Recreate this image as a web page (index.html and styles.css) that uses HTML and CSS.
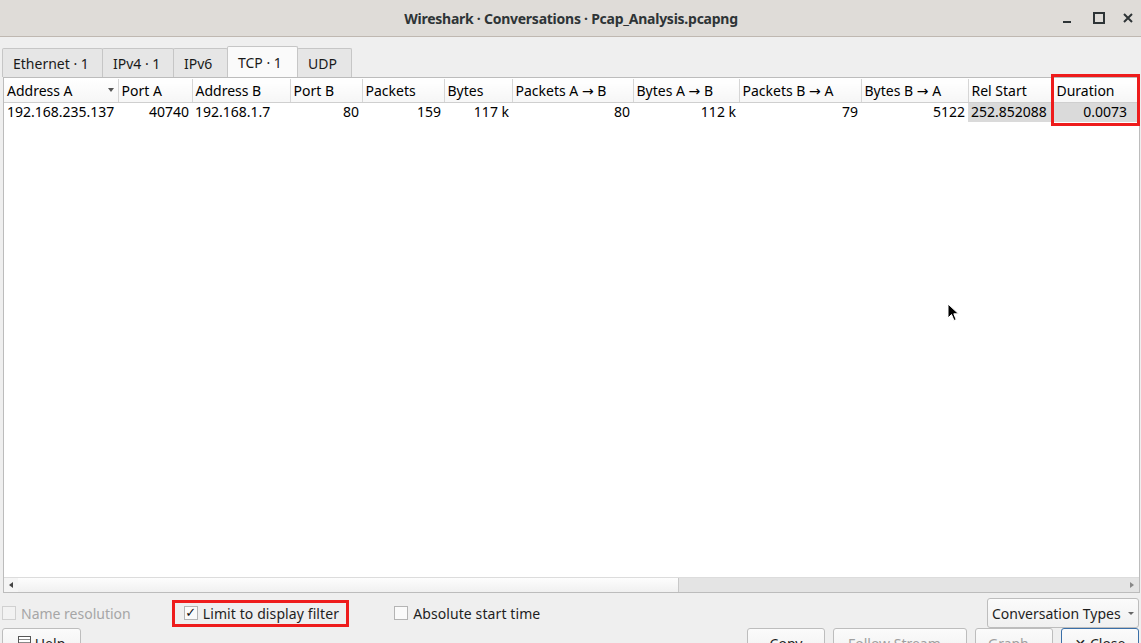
FILE: index.html
```html
<!DOCTYPE html>
<html>
<head>
<meta charset="utf-8">
<link rel="stylesheet" href="styles.css">
</head>
<body>
<div class="window">
  <header class="titlebar">
    <div class="title">Wireshark · Conversations · Pcap_Analysis.pcapng</div>
    <div class="controls">
      <span class="ctl min"></span>
      <span class="ctl max"></span>
      <span class="ctl close">
        <svg width="10" height="10" viewBox="0 0 10 10"><path d="M1 1L9 9M9 1L1 9" stroke="#2e3436" stroke-width="2"/></svg>
      </span>
    </div>
  </header>
  <main class="content">
    <nav class="tabs">
      <div class="tab">Ethernet · 1</div>
      <div class="tab">IPv4 · 1</div>
      <div class="tab">IPv6</div>
      <div class="tab active">TCP · 1</div>
      <div class="tab">UDP</div>
    </nav>
    <section class="pane">
      <div class="tablearea">
        <table class="grid">
          <colgroup>
            <col class="w114"><col class="w74"><col class="w98"><col class="w72"><col class="w82"><col class="w68"><col class="w121"><col class="w106"><col class="w122"><col class="w107"><col class="w85"><col class="w86">
          </colgroup>
          <thead>
            <tr>
              <th class="sorted">Address A<span class="sortarrow"></span></th>
              <th>Port A</th>
              <th>Address B</th>
              <th>Port B</th>
              <th>Packets</th>
              <th>Bytes</th>
              <th>Packets A → B</th>
              <th>Bytes A → B</th>
              <th>Packets B → A</th>
              <th>Bytes B → A</th>
              <th>Rel Start</th>
              <th>Duration</th>
            </tr>
          </thead>
          <tbody>
            <tr>
              <td>192.168.235.137</td>
              <td class="r">40740</td>
              <td>192.168.1.7</td>
              <td class="r">80</td>
              <td class="r">159</td>
              <td class="r">117 k</td>
              <td class="r">80</td>
              <td class="r">112 k</td>
              <td class="r">79</td>
              <td class="r">5122</td>
              <td class="hl">252.852088</td>
              <td class="r hl">0.0073</td>
            </tr>
          </tbody>
        </table>
      </div>
      <div class="hscroll">
        <span class="arrow left"></span>
        <span class="thumb"></span>
        <span class="trough"></span>
        <span class="arrow right"></span>
      </div>
    </section>
    <div class="options">
      <label class="check disabled"><span class="box"></span>Name resolution</label>
      <label class="check marked"><span class="box checked">✓</span>Limit to display filter</label>
      <label class="check abs"><span class="box"></span>Absolute start time</label>
      <span class="spacer"></span>
      <button class="btn dropdown">Conversation Types<span class="caret"></span></button>
    </div>
    <div class="buttons">
      <button class="btn help"><span class="helpicon"></span>Help</button>
      <span class="spacer"></span>
      <button class="btn">Copy</button>
      <button class="btn dim wide">Follow Stream...</button>
      <button class="btn dim">Graph...</button>
      <button class="btn focus">✕ Close</button>
    </div>
  </main>
  <div class="annot"></div>
  <svg class="cursor" width="14" height="20" viewBox="0 0 14 20"><path d="M1 1 L1 15 L4.5 11.5 L7 17.5 L9.2 16.6 L6.8 10.8 L11.5 10.8 Z" fill="#000" stroke="#fff" stroke-width="1"/></svg>
</div>
</body>
</html>
```

FILE: styles.css
```css
* { box-sizing: border-box; }
html, body { margin: 0; padding: 0; }
body {
  width: 1141px;
  height: 643px;
  overflow: hidden;
  font-family: "Noto Sans", "DejaVu Sans", sans-serif;
  font-size: 14px;
  color: #000;
  background: #efefef;
}
.window {
  position: relative;
  width: 1141px;
  height: 643px;
  overflow: hidden;
  display: flex;
  flex-direction: column;
}
.titlebar {
  height: 37px;
  flex: none;
  background: #dfdcd8;
  border-bottom: 1px solid #bfb8b1;
  display: flex;
  align-items: center;
  justify-content: center;
  position: relative;
}
.title {
  font-weight: bold;
  font-size: 14px;
  color: #2e3436;
  letter-spacing: -0.25px;
  padding-left: 1px;
}
.controls {
  position: absolute;
  right: 0;
  top: 0;
  height: 36px;
  display: flex;
  align-items: center;
}
.ctl {
  width: 32px;
  height: 20px;
  display: flex;
  align-items: center;
  justify-content: center;
}
.ctl.min::before {
  content: "";
  width: 8px;
  height: 2px;
  background: #2e3436;
  margin-top: 8px;
}
.ctl.max::before {
  content: "";
  width: 8px;
  height: 8px;
  border: 2px solid #2e3436;
}
.ctl.close { width: 26px; }
.content {
  flex: 1;
  display: flex;
  flex-direction: column;
  background: #efefef;
}
.tabs {
  display: flex;
  padding: 10px 0 0 2px;
  height: 40px;
  align-items: flex-end;
}
.tab {
  height: 29px;
  padding: 0 10px;
  display: flex;
  align-items: center;
  background: #e6e6e6;
  border: 1px solid #c6c6c6;
  border-bottom: none;
  border-radius: 2px 2px 0 0;
  color: #1a1a1a;
  margin-right: -1px;
}
.tab:nth-child(1) { width: 101px; }
.tab:nth-child(2) { width: 72px; }
.tab:nth-child(3) { width: 55px; }
.tab:nth-child(4) { width: 71px; }
.tab:nth-child(5) { width: 55px; }
.tab.active {
  background: #fafafa;
  height: 31px;
  position: relative;
  z-index: 1;
}
.pane {
  margin-left: 3px;
  width: 1137px;
  height: 516px;
  border: 1px solid #bcbcbc;
  background: #fff;
  display: flex;
  flex-direction: column;
}
.tablearea {
  flex: 1;
  padding-top: 1px;
  overflow: hidden;
}
.grid {
  border-collapse: collapse;
  table-layout: fixed;
  width: 1135px;
}
.w114 { width: 114px; } .w74 { width: 74px; } .w98 { width: 98px; }
.w72 { width: 72px; } .w82 { width: 82px; } .w68 { width: 68px; }
.w121 { width: 121px; } .w106 { width: 106px; } .w122 { width: 122px; }
.w107 { width: 107px; } .w85 { width: 85px; } .w86 { width: 86px; }
.grid th {
  height: 23px;
  font-weight: normal;
  text-align: left;
  padding: 0 3px 0 3px;
  background: linear-gradient(#ffffff, #f6f6f6);
  border-right: 1px solid #d6d6d6;
  border-bottom: 1px solid #cfcfcf;
  white-space: nowrap;
  overflow: hidden;
  position: relative;
}
.grid th:last-child { border-right: none; }
.sortarrow {
  position: absolute;
  right: 4px;
  top: 9px;
  width: 0;
  height: 0;
  border-left: 3.5px solid transparent;
  border-right: 3.5px solid transparent;
  border-top: 4px solid #555;
}
.grid td {
  height: 20px;
  padding: 0 3px;
  white-space: nowrap;
  overflow: hidden;
  line-height: 18px;
}
.grid td.r { text-align: right; }
.grid td.hl { background: #dadada; }
.grid td.hl:last-child { padding-right: 12px; }
.hscroll {
  height: 15px;
  flex: none;
  display: flex;
  border-top: 1px solid #dcdcdc;
  background: #e4e4e4;
}
.hscroll .arrow {
  width: 14px;
  display: flex;
  align-items: center;
  justify-content: center;
}
.hscroll .arrow.left::before {
  content: "";
  border-top: 3.5px solid transparent;
  border-bottom: 3.5px solid transparent;
  border-right: 4px solid #444;
}
.hscroll .arrow.right::before {
  content: "";
  border-top: 3.5px solid transparent;
  border-bottom: 3.5px solid transparent;
  border-left: 4px solid #888;
}
.hscroll .arrow.left { background: #f5f5f5; }
.hscroll .thumb {
  width: 661px;
  background: linear-gradient(#fdfdfd, #f0f0f0);
  border-right: 1px solid #c8c8c8;
}
.hscroll .trough { flex: 1; }
.options {
  height: 40px;
  display: flex;
  align-items: center;
  padding: 0 2px 0 2px;
}
.check {
  display: flex;
  align-items: center;
  color: #1e1e1e;
  white-space: nowrap;
}
.check .box {
  width: 14px;
  height: 14px;
  border: 1px solid #b4b4b4;
  background: #fafafa;
  margin-right: 5px;
  font-size: 13px;
  line-height: 12px;
  text-align: center;
  color: #111;
  font-family: "DejaVu Sans", sans-serif;
}
.check.disabled { color: #a6a6a6; }
.check.disabled .box { border-color: #d0d0d0; background: #f2f2f2; }
.check.marked {
  margin-left: 41px;
  border: 3px solid #ee1c1c;
  height: 27px;
  padding: 0 7px 0 9px;
  letter-spacing: 0.1px;
}
.check.abs { margin-left: 45px; letter-spacing: 0.1px; }
.spacer { flex: 1; }
.btn {
  font-family: inherit;
  font-size: 14px;
  color: #1e1e1e;
  background: linear-gradient(#fbfbfb, #f0f0f0);
  border: 1px solid #bdbdbd;
  border-radius: 3px;
  height: 30px;
  padding: 0 8px;
}
.dropdown {
  width: 152px;
  display: flex;
  align-items: center;
  padding: 0 4px;
  justify-content: space-between;
}
.caret {
  width: 0; height: 0;
  border-left: 3px solid transparent;
  border-right: 3px solid transparent;
  border-top: 3px solid #666;
}
.buttons {
  display: flex;
  padding: 0 2px;
  gap: 8px;
  height: 30px;
  margin-top: -5px;
}
.buttons .btn { width: 78px; text-align: center; }
.buttons .btn.help { width: 79px; display: flex; align-items: center; justify-content: center; gap: 4px; }
.buttons .btn.dim { color: #a0a0a0; }
.buttons .btn.wide { width: 134px; }
.buttons .btn.focus { border-color: #3a6fa8; }
.helpicon {
  width: 13px; height: 14px;
  border: 1px solid #555;
  background: repeating-linear-gradient(#fff 0 2px, #888 2px 3px);
}
.annot {
  position: absolute;
  left: 1051px;
  top: 74px;
  width: 89px;
  height: 52px;
  border: 3px solid #ee1c1c;
  pointer-events: none;
}
.cursor {
  position: absolute;
  left: 947px;
  top: 303px;
}
```
